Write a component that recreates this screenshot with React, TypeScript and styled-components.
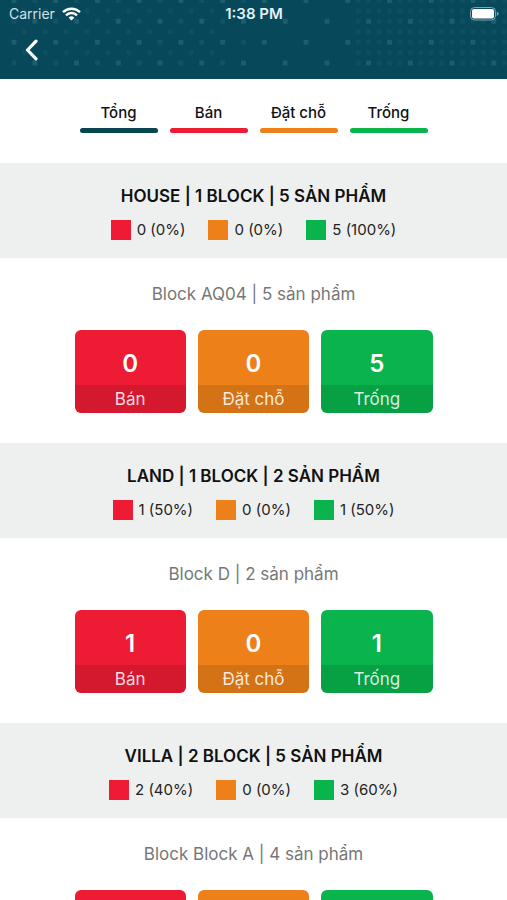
import React from "react";
import styled, { createGlobalStyle } from "styled-components";

const colors = {
  total: "#07454f",
  sold: "#ed1b34",
  held: "#ed8019",
  free: "#08b44b",
};

type Tone = keyof typeof colors;

const GlobalStyle = createGlobalStyle`
  * { box-sizing: border-box; }
  body {
    margin: 0;
    background: #fff;
    color: #111;
    font-family: Inter, "Noto Sans", sans-serif;
  }
`;

const Screen = styled.main`
  height: 100vh;
  overflow-y: auto;
  scrollbar-width: none;
`;

const Header = styled.header`
  position: relative;
  overflow: hidden;
  height: 79px;
  background: #07485a;
  color: #fff;
`;

const Dots = styled.svg`
  position: absolute;
  inset: 0;
  width: 100%;
  height: 100%;
`;

const StatusBar = styled.div`
  position: relative;
  display: grid;
  grid-template-columns: 1fr auto 1fr;
  align-items: center;
  height: 28px;
  padding: 0 8px 0 9px;
`;

const Carrier = styled.span`
  display: flex;
  align-items: center;
  gap: 7px;
  font-size: 14px;
  line-height: 20px;
  color: #d3e0e4;
`;

const Clock = styled.time`
  font-size: 15px;
  line-height: 20px;
  font-weight: 600;
  color: #e4f1f4;
`;

const Battery = styled.svg`
  justify-self: end;
  display: block;
`;

const BackButton = styled.button`
  position: relative;
  display: flex;
  align-items: center;
  justify-content: center;
  width: 44px;
  height: 44px;
  margin-left: 9px;
  padding: 0;
  border: 0;
  background: none;
  color: #fff;
`;

const Tabs = styled.nav`
  display: flex;
  justify-content: center;
  gap: 12px;
  padding: 24px 12px 30px;
`;

const Tab = styled.button<{ $tone: Tone }>`
  display: flex;
  flex-direction: column;
  align-items: center;
  gap: 5px;
  width: 78px;
  padding: 0;
  border: 0;
  background: none;
  color: #111;
  font: 500 15px/20px Inter, "Noto Sans", sans-serif;

  &::after {
    content: "";
    width: 100%;
    height: 5px;
    border-radius: 3px;
    background: ${({ $tone }) => colors[$tone]};
  }
`;

const SectionHeader = styled.div`
  display: flex;
  flex-direction: column;
  align-items: center;
  gap: 12px;
  height: 95px;
  padding-top: 21px;
  background: #eef0ef;
`;

const SectionTitle = styled.h2`
  margin: 0;
  font-size: 17px;
  line-height: 24px;
  font-weight: 600;
`;

const Legend = styled.ul`
  display: flex;
  gap: 23px;
  margin: 0;
  padding: 0;
  list-style: none;
`;

const LegendItem = styled.li<{ $tone: Tone }>`
  display: flex;
  align-items: center;
  gap: 6px;
  font-size: 15px;
  line-height: 20px;
  color: #222;

  &::before {
    content: "";
    width: 20px;
    height: 20px;
    background: ${({ $tone }) => colors[$tone]};
  }
`;

const Block = styled.div`
  height: 185px;
  padding: 24px 12px 0;
`;

const BlockTitle = styled.h3`
  margin: 0 0 24px;
  font-size: 17px;
  line-height: 24px;
  font-weight: 400;
  text-align: center;
  color: #777;
`;

const Cards = styled.div`
  display: grid;
  grid-template-columns: repeat(3, 1fr);
  gap: 12px;
  max-width: 358px;
  margin: 0 auto;
`;

const Card = styled.div<{ $tone: Tone }>`
  overflow: hidden;
  border-radius: 6px;
  background: ${({ $tone }) => colors[$tone]};
  color: #fff;
  text-align: center;
`;

const Count = styled.div`
  height: 55px;
  padding-top: 18px;
  font-size: 24px;
  line-height: 32px;
  font-weight: 600;
`;

const CardLabel = styled.div`
  height: 28px;
  background: rgba(0, 0, 0, 0.1);
  font-size: 17px;
  line-height: 28px;
  color: rgba(255, 255, 255, 0.85);
`;

const tabs: { tone: Tone; label: string }[] = [
  { tone: "total", label: "Tổng" },
  { tone: "sold", label: "Bán" },
  { tone: "held", label: "Đặt chỗ" },
  { tone: "free", label: "Trống" },
];

const statuses = tabs.slice(1);

const sections = [
  {
    title: "HOUSE | 1 BLOCK | 5 SẢN PHẨM",
    legend: ["0 (0%)", "0 (0%)", "5 (100%)"],
    block: "Block AQ04 | 5 sản phẩm",
    counts: [0, 0, 5],
  },
  {
    title: "LAND | 1 BLOCK | 2 SẢN PHẨM",
    legend: ["1 (50%)", "0 (0%)", "1 (50%)"],
    block: "Block D | 2 sản phẩm",
    counts: [1, 0, 1],
  },
  {
    title: "VILLA | 2 BLOCK | 5 SẢN PHẨM",
    legend: ["2 (40%)", "0 (0%)", "3 (60%)"],
    block: "Block Block A | 4 sản phẩm",
    counts: [2, 0, 2],
  },
];

const PITCH = 10.43;

function dotOpacity(row: number, col: number) {
  if (row % 2 === 0 && col % 4 === row % 4) return 0.5;
  if (col >= 33) return 0.18;
  if (col <= 22 && row % 2 === 0 && col % 2 === 0) return 0.25;
  if (col <= 20 && row % 2 === 1 && col % 2 === 1) return 0.18;
  return 0;
}

function HeaderDots() {
  const dots: React.ReactNode[] = [];
  for (let row = 0; row < 7; row++) {
    for (let col = 0; col < 48; col++) {
      const opacity = dotOpacity(row, col);
      if (opacity === 0) continue;
      dots.push(
        <rect
          key={`${row}-${col}`}
          x={14 + col * PITCH - 2.5}
          y={row * PITCH - 2}
          width={5}
          height={5}
          rx={1}
          fill="#2f7381"
          opacity={opacity}
        />,
      );
    }
  }
  return <Dots aria-hidden="true">{dots}</Dots>;
}

export default function App() {
  return (
    <Screen>
      <GlobalStyle />
      <Header>
        <HeaderDots />
        <StatusBar>
          <Carrier>
            Carrier
            <svg width="19" height="14" viewBox="0 0 19 14" fill="none" stroke="#fff" strokeWidth="2.4" aria-hidden="true">
              <path d="M1 5.2a12.2 12.2 0 0 1 17 0" />
              <path d="M4 8.3a7.9 7.9 0 0 1 11 0" />
              <path d="M9.5 13.6 6.6 10.7a4.1 4.1 0 0 1 5.8 0z" fill="#fff" stroke="none" />
            </svg>
          </Carrier>
          <Clock>1:38 PM</Clock>
          <Battery width="30" height="14" viewBox="0 0 30 14" role="img" aria-label="Battery full">
            <rect x="1.5" y="0.5" width="25" height="12.5" rx="4" fill="none" stroke="#7fa3b2" />
            <rect x="3" y="2" width="22" height="9.5" rx="2" fill="#fff" />
            <path d="M27.8 4.5q1.9.8 1.9 2.3t-1.9 2.3z" fill="#7fa3b2" />
          </Battery>
        </StatusBar>
        <BackButton aria-label="Back">
          <svg width="13" height="22" viewBox="0 0 13 22" fill="none" stroke="currentColor" strokeWidth="3.2" strokeLinecap="round" strokeLinejoin="round" aria-hidden="true">
            <path d="M11 2.2 2.5 11l8.5 8.8" />
          </svg>
        </BackButton>
      </Header>
      <Tabs>
        {tabs.map(({ tone, label }) => (
          <Tab key={tone} $tone={tone}>
            {label}
          </Tab>
        ))}
      </Tabs>
      {sections.map((s) => (
        <section key={s.title}>
          <SectionHeader>
            <SectionTitle>{s.title}</SectionTitle>
            <Legend>
              {statuses.map(({ tone }, i) => (
                <LegendItem key={tone} $tone={tone}>
                  {s.legend[i]}
                </LegendItem>
              ))}
            </Legend>
          </SectionHeader>
          <Block>
            <BlockTitle>{s.block}</BlockTitle>
            <Cards>
              {statuses.map(({ tone, label }, i) => (
                <Card key={tone} $tone={tone}>
                  <Count>{s.counts[i]}</Count>
                  <CardLabel>{label}</CardLabel>
                </Card>
              ))}
            </Cards>
          </Block>
        </section>
      ))}
    </Screen>
  );
}
